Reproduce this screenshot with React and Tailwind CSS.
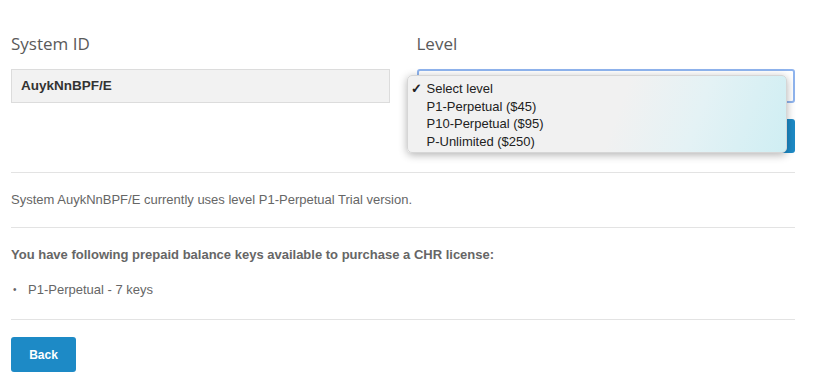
import React from 'react';

const Field = ({ label, children }) => (
  <div className="flex-1">
    <div className="h-[30px] pt-[4px] text-[17px] leading-[22px] text-[#5a5a5a] font-['Open_Sans',sans-serif]">{label}</div>
    <div className="mt-[10px]">{children}</div>
  </div>
);

const LevelMenu = () => (
  <div className="absolute left-[-10px] top-[6px] w-[380px] h-[78px] rounded-[5px] shadow-[0_2px_8px_rgba(0,0,0,0.3)] border border-[#d6d6d6] bg-[linear-gradient(110deg,#f1f1f1_55%,#e4f2f5_75%,#cfeef3_100%)] pt-[4px] text-[13px] leading-[17.5px] text-[#222]">
    {['Select level', 'P1-Perpetual ($45)', 'P10-Perpetual ($95)', 'P-Unlimited ($250)'].map((opt, i) => (
      <div key={opt} className="flex items-center">
        <span className="w-[19px] pl-[3px] text-[13px] font-bold">{i === 0 ? '✓' : ''}</span>
        <span>{opt}</span>
      </div>
    ))}
  </div>
);

export default function App() {
  return (
    <div className="w-[825px] h-[388px] bg-white pl-[11px] pr-[30px] pt-[29px] font-['Liberation_Sans',Arial,sans-serif] overflow-hidden">
      <div className="flex gap-[27px]">
        <Field label="System ID">
          <div className="h-[34px] border border-[#dcdcdc] bg-[#f2f2f2] flex items-center pl-[9px] text-[13.5px] font-bold text-[#333]">
            AuykNnBPF/E
          </div>
        </Field>
        <Field label="Level">
          <div className="relative">
            <div className="h-[34px] rounded-[3px] border-2 border-[#8fb4ee] bg-white" />
            <div className="mt-[16px] ml-auto w-[86px] h-[34px] rounded-[3px] bg-[#1d8ac6]" />
            <LevelMenu />
          </div>
        </Field>
      </div>

      <div className="mt-[19px] border-t border-[#e3e3e3]" />
      <p className="py-[19px] text-[13px] leading-[16px] text-[#666]">
        System AuykNnBPF/E currently uses level P1-Perpetual Trial version.
      </p>
      <div className="border-t border-[#e3e3e3]" />
      <p className="pt-[19px] text-[13px] leading-[16px] font-bold text-[#666]">
        You have following prepaid balance keys available to purchase a CHR license:
      </p>
      <ul className="mt-[19px] text-[13px] leading-[16px] text-[#666]">
        <li className="flex items-center">
          <span className="w-[17px] pl-[2px] text-[10px]">•</span>
          P1-Perpetual - 7 keys
        </li>
      </ul>
      <div className="mt-[21px] border-t border-[#e3e3e3]" />
      <button className="mt-[17px] w-[65px] h-[35px] rounded-[3px] bg-[#1d8ac6] text-white text-[12px] font-bold">
        Back
      </button>
    </div>
  );
}
